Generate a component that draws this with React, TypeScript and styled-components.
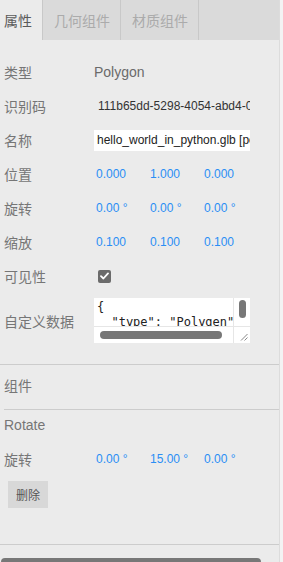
import React from 'react';
import styled, { createGlobalStyle } from 'styled-components';

const GlobalStyle = createGlobalStyle`
  html, body {
    margin: 0;
    padding: 0;
    background-color: #f3f3f3;
  }
  body {
    font-family: 'Liberation Sans', 'Noto Sans CJK SC', sans-serif;
    overflow: hidden;
  }
`;

const Page = styled.div`
  width: 283px;
  height: 562px;
  display: flex;
  overflow: hidden;
`;

const Panel = styled.div`
  width: 279px;
  height: 562px;
  background-color: #ebebeb;
  border-right: 1px solid #dcdcdc;
  display: flex;
  flex-direction: column;
  overflow: hidden;
  & > * {
    flex-shrink: 0;
  }
`;

const Tabs = styled.div`
  display: flex;
  height: 40px;
  background-color: #dadada;
`;

interface TabProps {
  active?: boolean;
  first?: boolean;
}

const Tab = styled.div<TabProps>`
  display: flex;
  align-items: center;
  padding: ${(p) => (p.first ? '0 10px 0 4px' : '0 10px 0 11px')};
  font-size: 14px;
  color: ${(p) => (p.active ? '#5a5a5a' : '#ababab')};
  background-color: ${(p) => (p.active ? '#ebebeb' : 'transparent')};
  border-right: 1px solid #c8c8c8;
`;

const Content = styled.div`
  padding-top: 15px;
  display: flex;
  flex-direction: column;
`;

const Row = styled.div`
  display: flex;
  align-items: center;
  height: 34px;
  flex-shrink: 0;
`;

const TallRow = styled.div`
  display: flex;
  align-items: center;
  padding: 5px 0;
`;

const Label = styled.div`
  width: 94px;
  padding-left: 4px;
  box-sizing: border-box;
  font-size: 14px;
  color: #767676;
  flex-shrink: 0;
`;

const Value = styled.div`
  font-size: 14px;
  color: #6a6a6a;
  white-space: nowrap;
  overflow: hidden;
  width: 156px;
`;

const Uuid = styled(Value)`
  padding-left: 4px;
  box-sizing: border-box;
  font-size: 12px;
  color: #333;
`;

const Number = styled.div`
  width: 54px;
  padding-left: 2px;
  box-sizing: border-box;
  font-size: 12px;
  color: #2a8ef5;
  white-space: nowrap;
`;

const NameInput = styled.div`
  width: 156px;
  height: 21px;
  background-color: #fff;
  font-size: 12px;
  color: #222;
  line-height: 21px;
  padding-left: 3px;
  box-sizing: border-box;
  white-space: nowrap;
  overflow: hidden;
`;

const Checkbox = styled.div`
  margin-left: 4px;
  width: 13px;
  height: 13px;
  border-radius: 2px;
  background-color: #6b6b6b;
  display: flex;
  align-items: center;
  justify-content: center;
`;

const CodeBox = styled.div`
  width: 156px;
  height: 45px;
  background-color: #fff;
  display: grid;
  grid-template-columns: 1fr 16px;
  grid-template-rows: 1fr 16px;
`;

const Code = styled.pre`
  margin: 0;
  padding: 2px 0 0 3px;
  font-family: 'DejaVu Sans Mono', monospace;
  font-size: 12px;
  line-height: 15px;
  color: #222;
  overflow: hidden;
  border-right: 1px solid #e6e6e6;
  border-bottom: 1px solid #e6e6e6;
`;

const VTrack = styled.div`
  display: flex;
  justify-content: center;
  padding-top: 2px;
  border-bottom: 1px solid #e6e6e6;
`;

const VThumb = styled.div`
  width: 7px;
  height: 18px;
  border-radius: 4px;
  background-color: #777;
`;

const HTrack = styled.div`
  display: flex;
  align-items: center;
  padding-left: 6px;
  border-right: 1px solid #e6e6e6;
`;

const HThumb = styled.div`
  width: 122px;
  height: 8px;
  border-radius: 4px;
  background-color: #777;
`;

const Resizer = styled.div`
  display: flex;
  align-items: flex-end;
  justify-content: flex-end;
  padding: 0 2px 2px 0;
`;

interface SepProps {
  inset?: boolean;
  gap?: number;
}

const Separator = styled.div<SepProps>`
  height: 1px;
  background-color: #cccccc;
  margin-left: ${(p) => (p.inset ? '4px' : '0')};
  margin-top: ${(p) => p.gap || 0}px;
`;

const SectionTitle = styled.div`
  height: 40px;
  display: flex;
  align-items: center;
  padding-left: 4px;
  margin-bottom: 4px;
  font-size: 14px;
  color: #767676;
`;

const ComponentTitle = styled(SectionTitle)`
  height: 30px;
  margin-bottom: 2px;
`;

const Button = styled.button`
  margin: 5px 0 0 8px;
  width: 40px;
  height: 27px;
  border: none;
  background-color: #d8d8d8;
  font-family: 'Noto Sans CJK SC', sans-serif;
  font-size: 12px;
  color: #555;
  padding: 0;
  align-self: flex-start;
`;

const PageScroll = styled.div`
  margin: 13px 0 0 1px;
  width: 260px;
  height: 8px;
  border-radius: 4px;
  background-color: #777;
`;

const Check = () => (
  <svg width="9" height="8" viewBox="0 0 9 8">
    <path d="M1 4.2 L3.4 6.5 L8 1.4" stroke="#fff" strokeWidth="1.8" fill="none" strokeLinecap="round" strokeLinejoin="round" />
  </svg>
);

const Grip = () => (
  <svg width="8" height="8" viewBox="0 0 8 8">
    <path d="M7.5 1 L1 7.5 M7.5 4.5 L4.5 7.5" stroke="#888" strokeWidth="1" />
  </svg>
);

const Vec = ({ values }: { values: string[] }) => (
  <>
    {values.map((v, i) => (
      <Number key={i}>{v}</Number>
    ))}
  </>
);

const App = () => {
  return (
    <Page>
      <GlobalStyle />
      <Panel>
        <Tabs>
          <Tab active first>属性</Tab>
          <Tab>几何组件</Tab>
          <Tab>材质组件</Tab>
        </Tabs>
        <Content>
          <Row>
            <Label>类型</Label>
            <Value>Polygon</Value>
          </Row>
          <Row>
            <Label>识别码</Label>
            <Uuid>111b65dd-5298-4054-abd4-0f3c2e</Uuid>
          </Row>
          <Row>
            <Label>名称</Label>
            <NameInput>hello_world_in_python.glb [polygon]</NameInput>
          </Row>
          <Row>
            <Label>位置</Label>
            <Vec values={['0.000', '1.000', '0.000']} />
          </Row>
          <Row>
            <Label>旋转</Label>
            <Vec values={['0.00 °', '0.00 °', '0.00 °']} />
          </Row>
          <Row>
            <Label>缩放</Label>
            <Vec values={['0.100', '0.100', '0.100']} />
          </Row>
          <Row>
            <Label>可见性</Label>
            <Checkbox>
              <Check />
            </Checkbox>
          </Row>
          <TallRow>
            <Label>自定义数据</Label>
            <CodeBox>
              <Code>{'{\n  "type": "Polygen"\n}'}</Code>
              <VTrack>
                <VThumb />
              </VTrack>
              <HTrack>
                <HThumb />
              </HTrack>
              <Resizer>
                <Grip />
              </Resizer>
            </CodeBox>
          </TallRow>
        </Content>
        <Separator gap={16} />
        <SectionTitle>组件</SectionTitle>
        <Separator inset />
        <ComponentTitle>Rotate</ComponentTitle>
        <Row>
          <Label>旋转</Label>
          <Vec values={['0.00 °', '15.00 °', '0.00 °']} />
        </Row>
        <Button>删除</Button>
        <Separator gap={36} />
        <PageScroll />
      </Panel>
    </Page>
  );
};

export default App;
